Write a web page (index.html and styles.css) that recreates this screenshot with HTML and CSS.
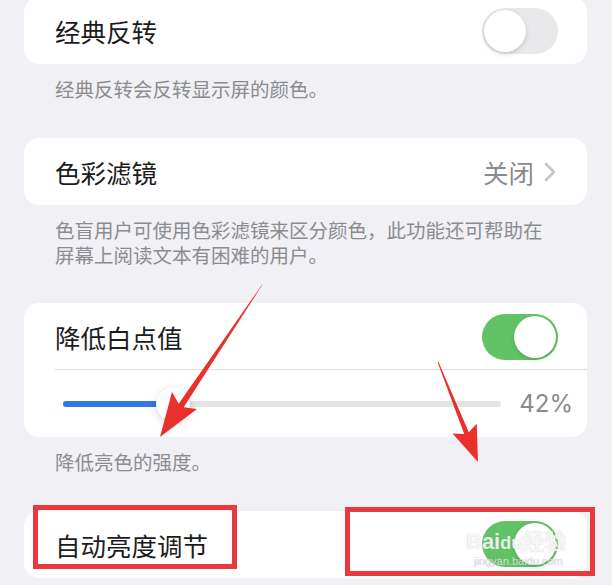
FILE: index.html
```html
<!DOCTYPE html>
<html lang="zh-CN">
<head>
<meta charset="utf-8">
<title>显示与文字大小</title>
<link rel="stylesheet" href="styles.css">
</head>
<body>
<div class="page">
  <section class="group first">
    <div class="card">
      <div class="row">
        <span class="label">经典反转</span>
        <span class="toggle off"><span class="knob"></span></span>
      </div>
    </div>
    <p class="caption">经典反转会反转显示屏的颜色。</p>
  </section>

  <section class="group">
    <div class="card">
      <div class="row">
        <span class="label">色彩滤镜</span>
        <span class="value">关闭
          <svg class="chev" width="14" height="22" viewBox="0 0 14 22"><path d="M3 3 L11 11 L3 19" fill="none" stroke="#c4c4c8" stroke-width="2.6" stroke-linecap="round" stroke-linejoin="round"/></svg>
        </span>
      </div>
    </div>
    <p class="caption"><span class="line">色盲用户可使用色彩滤镜来区分颜色，此功能还可帮助在</span><span class="line">屏幕上阅读文本有困难的用户。</span></p>
  </section>

  <section class="group">
    <div class="card">
      <div class="row divided">
        <span class="label">降低白点值</span>
        <span class="toggle on"><span class="knob"></span></span>
      </div>
      <div class="slider-row">
        <div class="track">
          <div class="fill" style="width:25%"></div>
          <div class="thumb" style="left:25%"></div>
        </div>
        <span class="pct">42%</span>
      </div>
    </div>
    <p class="caption">降低亮色的强度。</p>
  </section>

  <section class="group">
    <div class="card">
      <div class="row">
        <span class="label">自动亮度调节</span>
        <span class="toggle on"><span class="knob"></span></span>
      </div>
    </div>
  </section>

  <div class="watermark">
    <span class="wm-main">Bai<span class="paw">du</span>经验</span>
    <span class="wm-sub">jingyan.baidu.com</span>
  </div>

  <div class="redbox box1"></div>
  <div class="redbox box2"></div>

  <svg class="arrows" width="612" height="585" viewBox="0 0 612 585">
    <polygon fill="#e8302d" points="262.4,287.7 261.6,288.3 178.7,406.8 172,395.1 160,440 197,411.9 183.7,410.2"/>
    <polygon fill="#e8302d" points="438.4,364.8 437.6,365.2 464.2,437.1 452.5,436.4 478,465 476.7,426.8 468.8,435.3"/>
  </svg>
</div>
</body>
</html>
```

FILE: styles.css
```css
* { box-sizing: border-box; }

html, body {
  margin: 0;
  padding: 0;
  background: #f0f0f5;
}

body {
  width: 612px;
  height: 585px;
  overflow: hidden;
  font-family: "Noto Sans CJK SC", "Noto Sans", sans-serif;
}

.page {
  position: relative;
  width: 612px;
  height: 585px;
  padding: 0 25px 0 24px;
}

.group {
  margin-bottom: 36.5px;
}

.group.first {
  margin-top: -3px;
}

.card {
  background: #ffffff;
  border-radius: 15px;
  overflow: hidden;
}

.row {
  height: 67px;
  display: flex;
  align-items: center;
  justify-content: space-between;
  padding: 0 29px 0 31px;
  position: relative;
}

.row.divided::after {
  content: "";
  position: absolute;
  left: 31px;
  right: 0;
  bottom: 0;
  height: 1px;
  background: #dcdce0;
}

.label {
  font-size: 25.5px;
  color: #1c1c1e;
}

.value {
  display: flex;
  align-items: center;
  gap: 9px;
  font-size: 25.5px;
  color: #8a8a8e;
  padding-right: 1px;
}

.chev {
  display: block;
  margin-top: 1px;
}

.toggle {
  width: 76px;
  height: 46px;
  border-radius: 23px;
  position: relative;
  display: block;
  flex: none;
}

.toggle.off {
  background: #e9e9eb;
}

.toggle.on {
  background: #62c366;
}

.knob {
  position: absolute;
  top: 2px;
  width: 42px;
  height: 42px;
  border-radius: 50%;
  background: #ffffff;
  box-shadow: 0 2px 5px rgba(0, 0, 0, 0.15), 0 0 1px rgba(0, 0, 0, 0.1);
}

.toggle.off .knob { left: 2px; }
.toggle.on .knob { right: 2px; }

.slider-row {
  height: 67px;
  display: flex;
  align-items: center;
  padding: 0 14px 0 39px;
  gap: 18px;
}

.track {
  position: relative;
  flex: 1;
  height: 6px;
  border-radius: 3px;
  background: #e4e4e7;
}

.fill {
  position: absolute;
  left: 0;
  top: 0;
  bottom: 0;
  border-radius: 3px;
  background: #3478e6;
}

.thumb {
  position: absolute;
  top: 50%;
  width: 34px;
  height: 34px;
  margin: -17px 0 0 -17px;
  border-radius: 50%;
  background: #ffffff;
  box-shadow: 0 3px 8px rgba(0, 0, 0, 0.14), 0 0 1px rgba(0, 0, 0, 0.12);
}

.pct {
  font-family: "Inter", "Noto Sans", sans-serif;
  font-size: 24px;
  color: #8a8a8e;
}

.caption {
  margin: 0;
  padding: 12px 20px 0 31px;
  font-size: 19.5px;
  line-height: 25px;
  color: #8c8c90;
}

.caption .line {
  display: block;
  height: 25px;
  overflow: visible;
}

.watermark {
  position: absolute;
  left: 466px;
  top: 533px;
  display: flex;
  flex-direction: column;
  align-items: flex-start;
  color: rgba(255, 255, 255, 0.85);
  font-family: "Liberation Sans", "Noto Sans CJK SC", sans-serif;
  text-shadow: 0 0 1px rgba(120, 120, 120, 0.45);
  pointer-events: none;
}

.wm-main {
  font-size: 22px;
  font-weight: bold;
  line-height: 24px;
}

.paw {
  font-size: 18px;
}

.wm-sub {
  font-size: 11px;
  line-height: 12px;
  margin-left: 8px;
  color: rgba(230, 230, 230, 0.9);
}

.redbox {
  position: absolute;
  border: 5px solid #e83a3d;
  pointer-events: none;
}

.box1 {
  left: 33px;
  top: 508px;
  width: 204px;
  height: 64px;
}

.box2 {
  left: 345px;
  top: 510px;
  width: 250px;
  height: 69px;
}

.arrows {
  position: absolute;
  left: 0;
  top: 0;
  pointer-events: none;
}
```
